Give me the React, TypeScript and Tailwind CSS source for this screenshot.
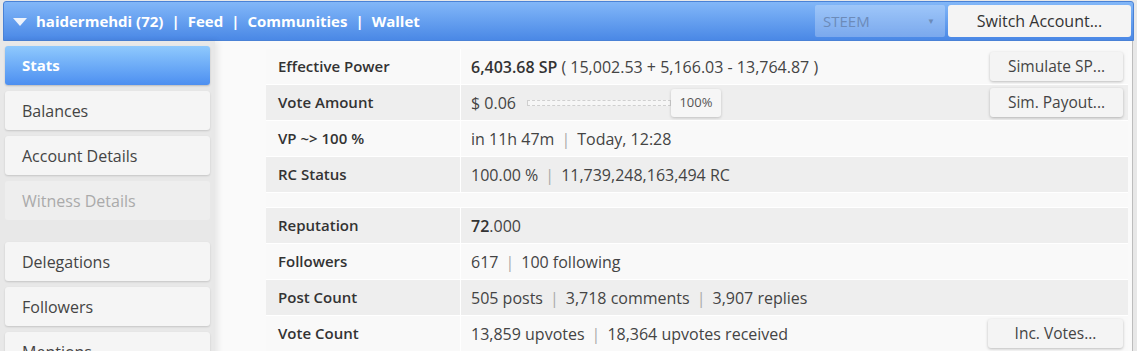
import React from "react";

const Sep = () => <span className="mx-[7px] text-[#aaa]">|</span>;

function Btn({ children, className = "" }: { children: React.ReactNode; className?: string }) {
  return (
    <div
      className={`flex h-[29px] items-center justify-center rounded-[3px] bg-[#f4f4f4] text-[15.5px] text-[#444] shadow-[0_1px_3px_rgba(0,0,0,0.25)] ${className}`}
    >
      {children}
    </div>
  );
}

function Row({
  label,
  shaded,
  children,
  action,
}: {
  label: string;
  shaded?: boolean;
  children: React.ReactNode;
  action?: React.ReactNode;
}) {
  return (
    <div className={`flex h-[36px] border-b border-white ${shaded ? "bg-[#eeeeee]" : "bg-[#f9f9f9]"}`}>
      <div className="flex w-[195px] items-center border-r border-white pl-[12px] text-[15px] font-semibold text-[#333]">
        {label}
      </div>
      <div className="flex flex-1 items-center justify-between pl-[10px] pr-[5px] text-[16px] text-[#444]">
        <div className="flex items-center">{children}</div>
        {action}
      </div>
    </div>
  );
}

export default function App() {
  const menu = [
    { name: "Stats", active: true },
    { name: "Balances" },
    { name: "Account Details" },
    { name: "Witness Details", disabled: true },
    { name: "gap" },
    { name: "Delegations" },
    { name: "Followers" },
    { name: "Mentions" },
  ];

  return (
    <div
      className="h-[351px] w-[1137px] overflow-hidden bg-[#e8e8e8] text-[15px]"
      style={{ fontFamily: '"Open Sans", sans-serif' }}
    >
      <div className="mx-[3px] mt-[1px] flex h-[40px] items-center rounded-t-[3px] border border-[#4a82d6] bg-gradient-to-b from-[#82b7f8] to-[#4a88e6] pl-[8px] pr-[2px]">
        <svg width="16" height="10" viewBox="0 0 16 10" className="mr-[8px] mt-[1px]">
          <path d="M1 1 H15 L8 9 Z" fill="#eef3fb" />
        </svg>
        <div className="flex items-center text-[15px] font-bold text-white">
          <span>haidermehdi (72)</span>
          <span className="mx-[8px]">|</span>
          <span>Feed</span>
          <span className="mx-[8px]">|</span>
          <span>Communities</span>
          <span className="mx-[8px]">|</span>
          <span>Wallet</span>
        </div>
        <div className="ml-auto flex items-center gap-[3px]">
          <div className="flex h-[32px] w-[130px] items-center justify-between rounded-[2px] bg-white/25 pl-[8px] pr-[10px] text-[15px] text-[#6c8bb9]">
            <span>STEEM</span>
            <span className="text-[8px]">▼</span>
          </div>
          <div className="flex h-[32px] w-[183px] items-center justify-center rounded-[3px] bg-[#f4f4f4] text-[16px] text-[#333]">
            Switch Account...
          </div>
        </div>
      </div>
      <div className="flex">
        <div className="relative z-10 flex w-[215px] flex-col gap-[6px] bg-[#e8e8e8] pl-[5px] pr-[5px] pt-[5px] text-[16px] shadow-[3px_0_6px_rgba(0,0,0,0.08)]">
          {menu.map((m) =>
            m.name === "gap" ? (
              <div key="gap" className="h-[10px] shrink-0" />
            ) : (
              <div
                key={m.name}
                className={`flex h-[39px] shrink-0 items-center rounded-[3px] pl-[17px] ${
                  m.active
                    ? "bg-gradient-to-b from-[#8fc9fd] to-[#4d8ff0] text-[15px] font-bold text-white shadow-[0_1px_2px_rgba(0,0,0,0.2)]"
                    : m.disabled
                    ? "bg-[#eeeeee] text-[#aaa]"
                    : "bg-[#f5f5f5] text-[#444] shadow-[0_1px_2px_rgba(0,0,0,0.15)]"
                }`}
              >
                {m.name}
              </div>
            )
          )}
        </div>
        <div className="h-[310px] w-[918px] border-r border-[#bdbdbd] bg-[#fafafa] pl-[51px] pr-[4px] pt-[8px]">
          <Row label="Effective Power" action={<Btn className="w-[133px]">Simulate SP...</Btn>}>
            <span className="font-semibold text-[#333]">6,403.68 SP</span>
            <span className="ml-[4px]">( 15,002.53 + 5,166.03 - 13,764.87 )</span>
          </Row>
          <Row label="Vote Amount" shaded action={<Btn className="w-[133px]">Sim. Payout...</Btn>}>
            <span>$ 0.06</span>
            <div className="ml-[11px] h-[6px] w-[144px] border border-dashed border-[#cfcfcf] bg-[#f6f6f6]" />
            <div className="flex h-[28px] w-[50px] items-center justify-center rounded-[3px] bg-[#f6f6f6] text-[13px] text-[#555] shadow-[0_1px_3px_rgba(0,0,0,0.2)]">
              100%
            </div>
          </Row>
          <Row label="VP ~> 100 %">
            <span>in 11h 47m</span>
            <Sep />
            <span>Today, 12:28</span>
          </Row>
          <Row label="RC Status" shaded>
            <span>100.00 %</span>
            <Sep />
            <span>11,739,248,163,494 RC</span>
          </Row>
          <div className="h-[15px] border-b border-white bg-[#f9f9f9]" />
          <Row label="Reputation" shaded>
            <span className="font-semibold text-[#333]">72</span>
            <span>.000</span>
          </Row>
          <Row label="Followers">
            <span>617</span>
            <Sep />
            <span>100 following</span>
          </Row>
          <Row label="Post Count" shaded>
            <span>505 posts</span>
            <Sep />
            <span>3,718 comments</span>
            <Sep />
            <span>3,907 replies</span>
          </Row>
          <Row label="Vote Count" action={<Btn className="w-[135px]">Inc. Votes...</Btn>}>
            <span>13,859 upvotes</span>
            <Sep />
            <span>18,364 upvotes received</span>
          </Row>
        </div>
      </div>
    </div>
  );
}
